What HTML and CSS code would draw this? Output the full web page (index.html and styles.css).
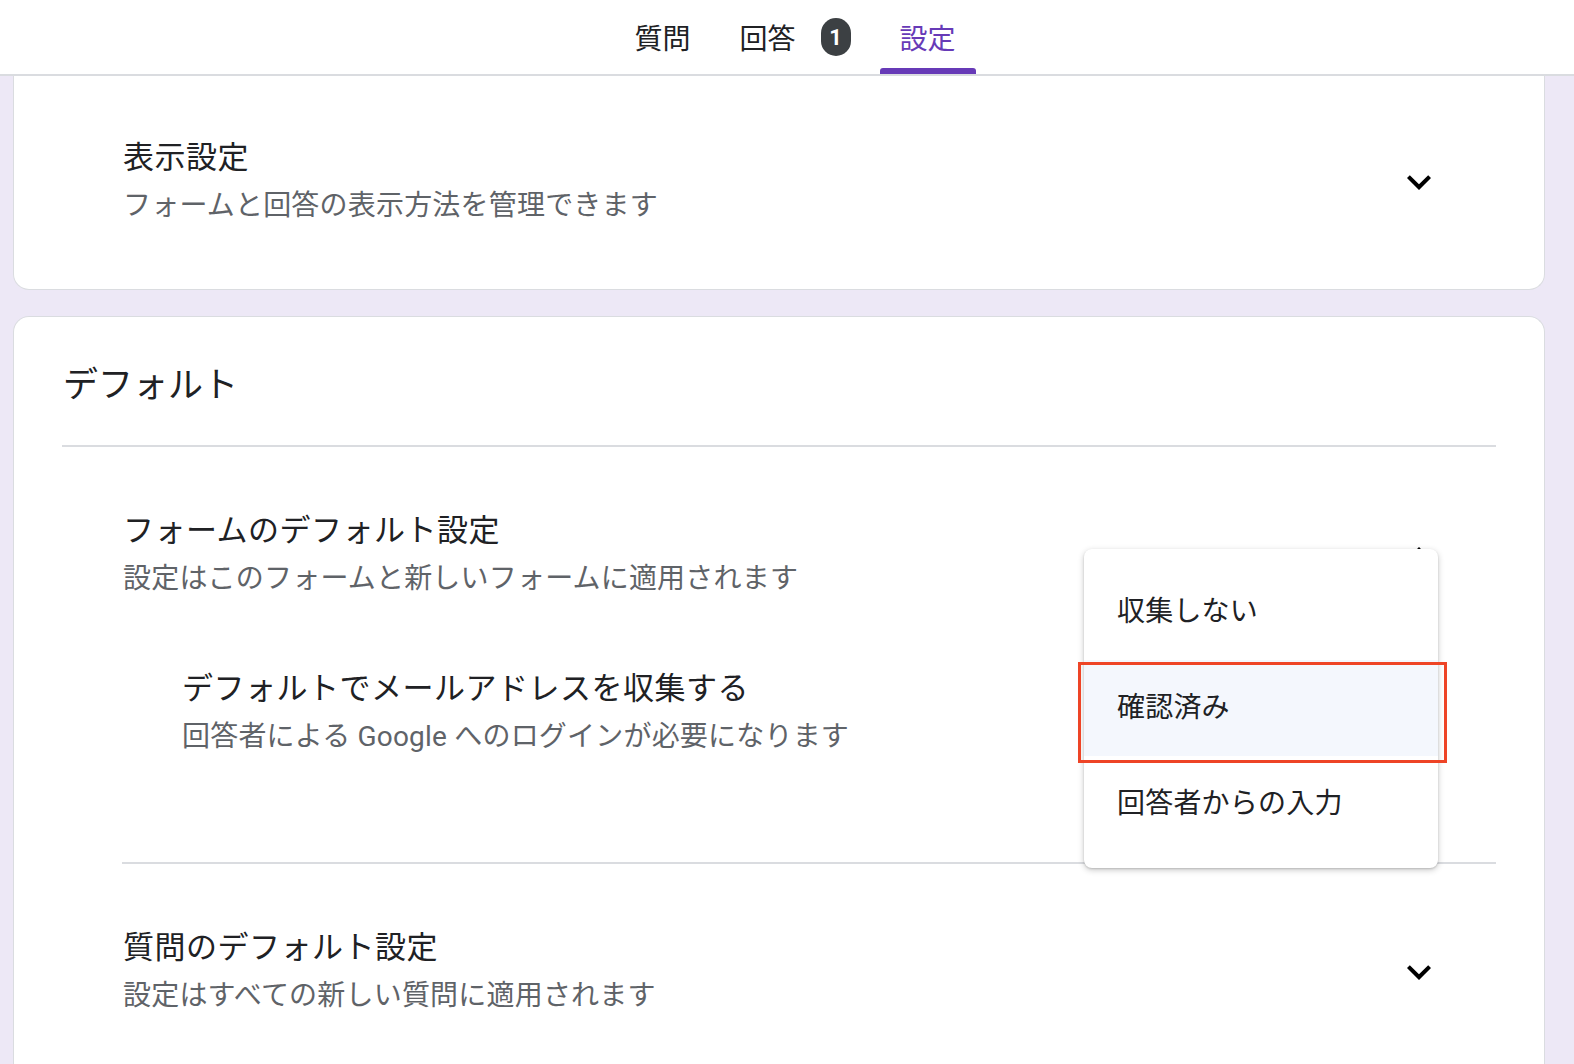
FILE: index.html
```html
<!DOCTYPE html>
<html lang="ja">
<head>
<meta charset="utf-8">
<title>設定</title>
<link rel="stylesheet" href="styles.css">
</head>
<body>
<header class="header">
  <div class="tab">質問</div>
  <div class="tab">回答<span class="badge">1</span></div>
  <div class="tab active">設定</div>
</header>
<main class="main">
  <section class="card card-first">
    <div class="row">
      <div class="texts">
        <div class="title">表示設定</div>
        <div class="subtitle">フォームと回答の表示方法を管理できます</div>
      </div>
      <svg class="chev" viewBox="0 0 24 24"><path d="M7.41 8.59L12 13.17l4.59-4.58L18 10l-6 6-6-6 1.41-1.41z"/></svg>
    </div>
  </section>
  <section class="card card-second">
    <h2 class="heading">デフォルト</h2>
    <div class="divider"></div>
    <div class="section sec-form">
      <div class="row">
        <div class="texts">
          <div class="title">フォームのデフォルト設定</div>
          <div class="subtitle">設定はこのフォームと新しいフォームに適用されます</div>
        </div>
        <svg class="chev" viewBox="0 0 24 24"><path d="M7.41 15.41L12 10.83l4.59 4.58L18 14l-6-6-6 6z"/></svg>
      </div>
      <div class="email">
        <div class="title">デフォルトでメールアドレスを収集する</div>
        <div class="subtitle">回答者による Google へのログインが必要になります</div>
      </div>
    </div>
    <div class="divider divider-inset"></div>
    <div class="section sec-question">
      <div class="row">
        <div class="texts">
          <div class="title">質問のデフォルト設定</div>
          <div class="subtitle">設定はすべての新しい質問に適用されます</div>
        </div>
        <svg class="chev" viewBox="0 0 24 24"><path d="M7.41 8.59L12 13.17l4.59-4.58L18 10l-6 6-6-6 1.41-1.41z"/></svg>
      </div>
    </div>
    <div class="menu">
      <div class="menu-item">収集しない</div>
      <div class="menu-item selected">確認済み</div>
      <div class="menu-item">回答者からの入力</div>
      <div class="mark"></div>
    </div>
  </section>
</main>
</body>
</html>
```
FILE: styles.css
```css
* { box-sizing: border-box; }
html, body { margin: 0; height: 100%; overflow: hidden; }
body {
  background: #ede8f6;
  font-family: Roboto, "Noto Sans CJK JP", sans-serif;
  color: #202124;
}
.header {
  height: 76px;
  background: #fff;
  border-bottom: 2px solid #dadce0;
  display: flex;
  justify-content: center;
  padding-left: 16px;
  gap: 9px;
}
.tab {
  position: relative;
  display: flex;
  align-items: center;
  height: 74px;
  padding: 0 20px;
  font-size: 28px;
  color: #202124;
}
.tab.active { color: #673ab7; }
.tab.active::after {
  content: "";
  position: absolute;
  left: 0; right: 0; bottom: 0;
  height: 6px;
  background: #673ab7;
  border-radius: 3px 3px 0 0;
}
.badge {
  margin-left: 25px;
  width: 30px;
  height: 38px;
  border-radius: 15px;
  background: #3c4043;
  color: #fff;
  font-family: Roboto, sans-serif;
  font-weight: 700;
  font-size: 22px;
  display: flex;
  align-items: center;
  justify-content: center;
}
.main { padding: 0 29px 0 13px; }
.card {
  background: #fff;
  border: 1px solid #dadce0;
  border-radius: 16px;
}
.card-first {
  border-top: none;
  border-radius: 0 0 16px 16px;
  padding: 58px 101px 59px 109px;
}
.row { display: flex; align-items: center; }
.texts { flex: 1; }
.title { font-size: 31px; line-height: 48px; color: #202124; letter-spacing: 0.5px; }
.subtitle { font-size: 28px; line-height: 48px; color: #5f6368; letter-spacing: 0.2px; }
.chev { width: 48px; height: 48px; fill: #000; flex: none; }
.card-second {
  position: relative;
  margin-top: 26px;
  padding: 45px 48px 42px;
  border-bottom: none;
  border-radius: 16px 16px 0 0;
  height: 760px;
}
.heading {
  margin: 0;
  font-weight: 400;
  font-size: 35px;
  line-height: 48px;
  color: #202124;
  padding-left: 1px;
}
.divider { height: 2px; background: #dadce0; margin-top: 35px; }
.divider-inset { margin-left: 60px; margin-top: 101px; }
.section { padding: 0 53px 0 61px; }
.sec-form { margin-top: 60px; }
.sec-question { margin-top: 60px; }
.email { margin-top: 62px; padding-left: 59px; }
.menu {
  position: absolute;
  top: 232px;
  left: 1070px;
  width: 354px;
  padding: 15px 0 16px;
  background: #fff;
  border-radius: 8px;
  box-shadow: 0 2px 6px rgba(0,0,0,0.22), 0 1px 2px rgba(0,0,0,0.14);
}
.menu-item {
  height: 96px;
  line-height: 96px;
  padding-left: 33px;
  font-size: 28px;
  color: #202124;
  letter-spacing: 0.2px;
}
.menu-item.selected { background: #f4f7fd; }
.mark {
  position: absolute;
  top: 113px;
  left: -6px;
  width: 369px;
  height: 101px;
  border: 3px solid #ee4426;
}
```
